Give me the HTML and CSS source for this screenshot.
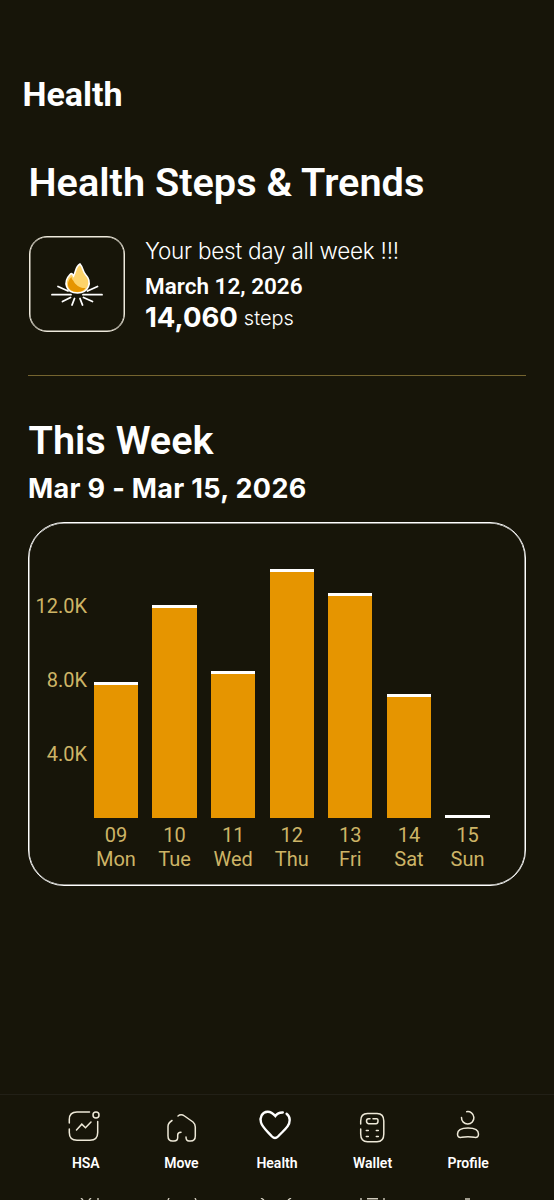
FILE: index.html
```
<!DOCTYPE html>
<html lang="en">
<head>
    <meta charset="UTF-8">
    <meta name="viewport" content="width=device-width, initial-scale=1.0">
    <title>Health</title>
    <link rel="stylesheet" href="styles.css">
</head>
<body>
    <div class="screen">
        <header class="topbar">Health</header>

        <main class="content">
            <h1>Health Steps &amp; Trends</h1>

            <section class="best-day">
                <div class="badge">
                    <svg width="56" height="48" viewBox="0 0 56 48">
                        <g stroke="#fff" stroke-width="1.8" stroke-linecap="round" fill="none">
                            <path d="M3 27.7h19M34 27.7h19M9 19.5l10 4.5M48.500 19.500l-10 4.500M21.500 30.500l-8 4M25.500 31.500l-2.500 6.500M31 31.500l2.500 6.500M34.500 30.500l9 4"/>
                        </g>
                        <path d="M31-3C34.500 1 33.500 4 36.500 7.500C43.500 15 40 25.800 28.500 26C16.500 26 14 15 21 7.500C22.500 6 23.500 6.500 24.500 9C27 5 26 0 31-3Z" fill="#fdd36a" stroke="#fff" stroke-width="1.600"/>
                        <path d="M22.500 10C17 15 17.500 24.500 28 25C32 25 35 23.500 36.500 21C31 21.500 26.500 18 24.500 14C23.500 12.500 22.500 12 22.500 10Z" fill="#e69500"/>
                    </svg>
                </div>
                <div class="best-info">
                    <div class="best-title">Your best day all week !!!</div>
                    <div class="best-date">March 12, 2026</div>
                    <div class="best-steps"><b>14,060</b><span>steps</span></div>
                </div>
            </section>

            <hr>

            <h2>This Week</h2>
            <h3>Mar 9 - Mar 15, 2026</h3>

            <section class="chart">
                <div class="axis">
                    <span>12.0K</span>
                    <span>8.0K</span>
                    <span>4.0K</span>
                </div>
                <div class="bars">
                    <div class="day"><div class="bar" style="height: 136px"></div><span>09</span><span>Mon</span></div>
                    <div class="day"><div class="bar" style="height: 213px"></div><span>10</span><span>Tue</span></div>
                    <div class="day"><div class="bar" style="height: 147px"></div><span>11</span><span>Wed</span></div>
                    <div class="day"><div class="bar" style="height: 249px"></div><span>12</span><span>Thu</span></div>
                    <div class="day"><div class="bar" style="height: 225px"></div><span>13</span><span>Fri</span></div>
                    <div class="day"><div class="bar" style="height: 124px"></div><span>14</span><span>Sat</span></div>
                    <div class="day"><div class="bar" style="height: 3px"></div><span>15</span><span>Sun</span></div>
                </div>
            </section>
        </main>

        <nav class="tabs">
            <a class="tab">
                <svg viewBox="0 0 36 36"><path d="M22.500 4H10Q2.300 4 2.300 11.500V15M2.300 21V24.500Q2.300 32.300 10 32.300H23Q30.700 32.300 30.700 24.500V13.500M9.500 22L14.800 16.200L18.500 19.800L24 14"/><circle cx="29" cy="7" r="3"/></svg>
                <span>HSA</span>
            </a>
            <a class="tab">
                <svg viewBox="0 0 36 36"><path d="M9 12.500Q5 15 5 18.500V28Q5 33 9.500 33H11Q14.700 33 14.700 29.500V27Q14.700 24.300 18 24.200M15 8Q18 5.500 21.500 8L30 14Q32.300 16 32.300 19V28Q32.300 33 27.500 33H26Q23 33 23 29"/></svg>
                <span>Move</span>
            </a>
            <a class="tab active">
                <svg viewBox="0 0 36 36"><path d="M24.800 4.500Q20 4.300 17.300 8Q13.500 3.500 9.500 3.700C4 4 1.500 9.500 3 14.500C4.200 19 8 22 14 28.500Q17 31.500 20 28.500C26 22 31.700 18.500 31.700 12Q31.700 8 28.600 5.700"/></svg>
                <span>Health</span>
            </a>
            <a class="tab">
                <svg viewBox="0 0 36 36"><path d="M6.700 16V13Q6.700 5.500 13.500 5.500H23Q29.800 5.500 29.800 13V26Q29.800 33.700 23 33.700H13.500Q6.700 33.700 6.700 26V21M16 10.700H14.500Q12.500 10.700 12.500 13T14.500 15.700H22Q24 15.700 24 13T22 10.700H19M12.300 22.400h2M22.300 22.400h2M12.300 28.400h2M22.300 28.400h2"/></svg>
                <span>Wallet</span>
            </a>
            <a class="tab">
                <svg viewBox="0 0 36 36"><path d="M16.700 3.700A6.200 6.200 0 1 1 11.500 9.500M18 20C10 20 7.500 22.500 7.500 26Q7.500 30 11.500 29.300Q18 28 24.500 29.300Q28.500 30 28.500 26C28.500 22.500 26 20 18 20Z"/></svg>
                <span>Profile</span>
            </a>
        </nav>

        <!-- top edge of the next icon row, cut off by the screen -->
        <svg class="peek" viewBox="0 0 554 2"><path d="M81 0l2 2M91 0l-2 2M98 0v2M169 0l-1 2M195 0l1 2M261 0l3 2M291 0l-3 2M361 0v2M367 .7h11M384 0v2M465 1h5"/></svg>
    </div>
</body>
</html>
```
FILE: styles.css
```
body {
    margin: 0;
    background: #171509;
    color: #fff;
    font-family: Roboto, sans-serif;
}

.screen {
    display: flex;
    flex-direction: column;
    height: 1200px;
    overflow: hidden;
}

.topbar {
    padding: 74px 0 0 22.5px;
    font-size: 34px;
    font-weight: 700;
    line-height: 40px;
}

.content {
    flex: 1;
    padding: 44px 28px 0;
}

h1, h2, h3 {
    margin: 0;
    white-space: nowrap;
}

h1, h2 {
    padding-left: 0.5px;
    font-size: 39.7px;
    font-weight: 600;
    line-height: 49px;
}

.best-day {
    display: flex;
    gap: 20px;
    margin: 29px 1px 0;
    height: 96px;
}

.badge {
    display: flex;
    align-items: center;
    justify-content: center;
    width: 96px;
    height: 96px;
    box-sizing: border-box;
    border: 1px solid #eee9dc;
    border-radius: 18px;
    box-shadow: inset 0 0 0 0.5px #eee9dc;
}

.badge svg {
    overflow: visible;
    margin-top: 13px;
}

.best-info {
    white-space: nowrap;
}

.best-title {
    font-family: Inter, sans-serif;
    font-size: 22.5px;
    font-weight: 300;
    line-height: 30px;
    letter-spacing: -0.25px;
}

.best-date {
    margin-top: 6px;
    font-size: 22.5px;
    font-weight: 600;
    line-height: 28px;
}

.best-steps {
    display: flex;
    align-items: baseline;
    gap: 6px;
    font-family: Inter, sans-serif;
    line-height: 34px;
}

.best-steps b {
    font-size: 27.5px;
}

.best-steps span {
    padding-bottom: 2px;
    font-size: 20px;
    font-weight: 300;
    transform: translateY(-2px);
}

hr {
    height: 1px;
    margin: 43px 0 40px;
    border: 0;
    background: #75642f;
}

h3 {
    margin-top: 5px;
    font-family: Inter, sans-serif;
    font-size: 27px;
    font-weight: 700;
    line-height: 37px;
    letter-spacing: 0.33px;
}

.chart {
    display: flex;
    box-sizing: border-box;
    height: 364px;
    margin-top: 15px;
    padding-bottom: 14px;
    border: 1px solid #fff;
    border-radius: 36px;
    box-shadow: inset 0 0 0 0.5px #fff;
    color: #cdb466;
    font-size: 20px;
}

.axis {
    display: flex;
    flex-direction: column;
    gap: 50px;
    width: 58px;
    padding-top: 71px;
    text-align: right;
    line-height: 24px;
}

.bars {
    display: flex;
    align-items: flex-end;
    gap: 14.3px;
    margin-left: 6.8px;
}

.day {
    display: flex;
    flex-direction: column;
    width: 44.3px;
    text-align: center;
    line-height: 24px;
}

.bar {
    box-sizing: border-box;
    margin-bottom: 5px;
    border-top: 3px solid #fff;
    background: #e69500;
}

.tabs {
    display: flex;
    box-sizing: border-box;
    height: 104px;
    padding: 13px 38px 0;
    border-top: 1px solid #222017;
}

.tab {
    display: flex;
    flex: 1;
    flex-direction: column;
    align-items: center;
    gap: 10px;
    font-size: 14px;
    font-weight: 600;
    line-height: 18px;
}

.tab svg {
    width: 36px;
    height: 36px;
    margin-left: -1px;
    fill: none;
    stroke: #eee9d8;
    stroke-width: 1.5;
    stroke-linecap: round;
}

.tab.active svg {
    stroke: #fff;
    stroke-width: 2.4;
}

.peek {
    height: 2px;
    fill: none;
    stroke: #cfcabc;
    stroke-width: 1.4;
}
```
